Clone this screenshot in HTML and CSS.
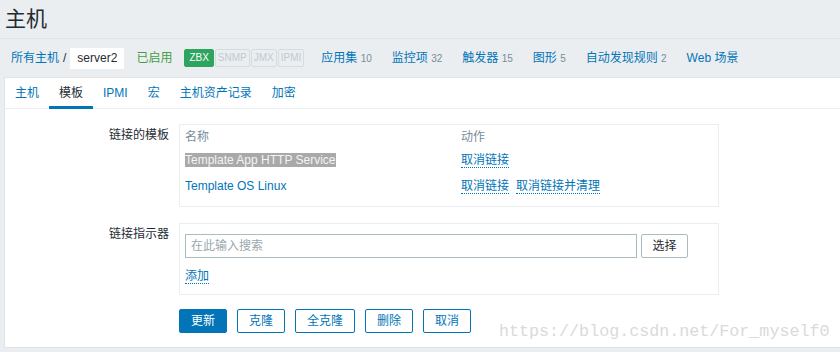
FILE: index.html
```html
<!DOCTYPE html>
<html lang="zh-CN">
  <head>
    <meta charset="UTF-8" />
    <meta name="viewport" content="width=device-width, initial-scale=1.0" />
    <link rel="stylesheet" href="styles.css">
    <title>主机</title>
  </head>
  <body>
    <header class="page-title">
      <h1>主机</h1>
    </header>

    <nav class="host-nav">
      <a class="link" href="#">所有主机</a>
      <span class="sep">/</span>
      <span class="crumb-current">server2</span>
      <span class="status-on">已启用</span>
      <span class="avail">
        <span class="badge on">ZBX</span>
        <span class="badge">SNMP</span>
        <span class="badge">JMX</span>
        <span class="badge">IPMI</span>
      </span>
      <ul class="host-links">
        <li><a class="link" href="#">应用集</a> <span class="count">10</span></li>
        <li><a class="link" href="#">监控项</a> <span class="count">32</span></li>
        <li><a class="link" href="#">触发器</a> <span class="count">15</span></li>
        <li><a class="link" href="#">图形</a> <span class="count">5</span></li>
        <li><a class="link" href="#">自动发现规则</a> <span class="count">2</span></li>
        <li><a class="link" href="#">Web 场景</a></li>
      </ul>
    </nav>

    <main class="panel">
      <ul class="tabs">
        <li><a href="#">主机</a></li>
        <li class="active"><a href="#">模板</a></li>
        <li><a href="#">IPMI</a></li>
        <li><a href="#">宏</a></li>
        <li><a href="#">主机资产记录</a></li>
        <li><a href="#">加密</a></li>
      </ul>

      <form class="form">
        <div class="form-row">
          <label>链接的模板</label>
          <div class="box templates">
            <div class="trow head">
              <span>名称</span>
              <span>动作</span>
            </div>
            <div class="trow first">
              <span><span class="selected">Template App HTTP Service</span></span>
              <span><a class="action" href="#">取消链接</a></span>
            </div>
            <div class="trow second">
              <span><a class="link" href="#">Template OS Linux</a></span>
              <span class="actions">
                <a class="action" href="#">取消链接</a>
                <a class="action" href="#">取消链接并清理</a>
              </span>
            </div>
          </div>
        </div>

        <div class="form-row">
          <label>链接指示器</label>
          <div class="box linker">
            <div class="search">
              <input type="text" placeholder="在此输入搜索" />
              <button type="button" class="btn-grey">选择</button>
            </div>
            <a class="action add" href="#">添加</a>
          </div>
        </div>

        <div class="form-row">
          <span></span>
          <div class="buttons">
            <button type="button" class="btn primary">更新</button>
            <button type="button" class="btn">克隆</button>
            <button type="button" class="btn">全克隆</button>
            <button type="button" class="btn">删除</button>
            <button type="button" class="btn">取消</button>
          </div>
        </div>
      </form>
    </main>

    <div class="watermark">https://blog.csdn.net/For_myself0</div>
  </body>
</html>
```

FILE: styles.css
```css
* {
  box-sizing: border-box;
  --blue: #0275b8;
  --text: #1f2c33;
  --muted: #768d99;
  --line: #dfe4e7;
  --light: #ebeef0;
  --field: #acbbc2;
}

body {
  margin: 0;
  background-color: var(--light);
  color: var(--text);
  font-family: 'Liberation Sans', 'Noto Sans CJK SC', sans-serif;
  font-size: 12px;
  line-height: 14px;
}

a {
  text-decoration: none;
}

ul {
  list-style: none;
  margin: 0;
  padding: 0;
}

.link {
  color: var(--blue);
}

/* title */

.page-title {
  height: 39px;
  border-bottom: 1px solid var(--line);
}

.page-title h1 {
  margin: 0;
  padding-left: 5px;
  font-size: 21px;
  font-weight: normal;
  line-height: 38px;
}

/* host navigation */

.host-nav {
  display: flex;
  align-items: center;
  height: 38px;
  padding-left: 11px;
}

.sep {
  padding: 0 4px;
}

.crumb-current {
  display: flex;
  align-items: center;
  height: 21px;
  padding: 0 7px;
  background-color: white;
}

.status-on {
  margin-left: 12px;
  color: #429e47;
}

.avail {
  display: flex;
  margin-left: 12px;
}

.badge {
  display: flex;
  align-items: center;
  height: 18px;
  padding: 0 2px;
  margin-left: 1px;
  border: 1px solid #d5dce0;
  border-radius: 2px;
  color: #c0cad0;
  font-size: 10px;
}

.badge.on {
  margin-left: 0;
  padding: 0 4px;
  border-color: #2ea55f;
  background-color: #2ea55f;
  color: white;
}

.host-links {
  display: flex;
  gap: 20px;
  margin-left: 17px;
}

.count {
  color: var(--muted);
  font-size: 10px;
}

/* panel */

.panel {
  margin-left: 4px;
  padding-bottom: 14px;
  background-color: white;
  border: 1px solid var(--line);
  border-right: 0;
}

.tabs {
  display: flex;
  height: 31px;
  border-bottom: 1px solid var(--light);
}

.tabs a {
  display: block;
  height: 31px;
  padding: 0 10px;
  color: var(--blue);
  line-height: 30px;
}

.tabs .active a {
  color: var(--text);
  box-shadow: inset 0 -3px 0 var(--blue);
}

/* form */

.form {
  display: grid;
  gap: 16px;
  padding-top: 15px;
}

.form-row {
  display: grid;
  grid-template-columns: 164px 540px;
  column-gap: 10px;
}

.form-row label {
  padding-top: 4px;
  text-align: right;
}

.box {
  border: 1px solid var(--light);
  padding: 0 5px;
}

.templates {
  padding-bottom: 12px;
}

.trow {
  display: grid;
  grid-template-columns: 276px 1fr;
}

.trow.head {
  padding-top: 5px;
  color: var(--muted);
}

.trow.first {
  margin-top: 9px;
}

.trow.second {
  margin-top: 12px;
}

.selected {
  background-color: #a9a9a9;
  color: #f4f4f4;
}

.actions {
  display: flex;
  gap: 7px;
}

.action {
  color: var(--blue);
  border-bottom: 1px dotted var(--blue);
}

.linker {
  padding-top: 10px;
  padding-bottom: 11px;
}

.search {
  display: flex;
  gap: 4px;
  margin-bottom: 11px;
}

input {
  width: 452px;
  height: 24px;
  margin: 0;
  padding: 0 5px;
  border: 1px solid var(--field);
  font: inherit;
  color: var(--text);
}

input::placeholder {
  color: #9aa7ae;
}

button {
  height: 24px;
  margin: 0;
  font: inherit;
  border-radius: 2px;
  cursor: pointer;
}

.btn-grey {
  width: 47px;
  padding: 0;
  border: 1px solid var(--field);
  background-color: white;
  color: var(--text);
}

.buttons {
  display: flex;
  gap: 10px;
  margin-top: -2px;
}

.btn {
  padding: 0 11px;
  border: 1px solid var(--blue);
  background-color: white;
  color: var(--blue);
}

.btn.primary {
  background-color: var(--blue);
  color: white;
}

/* blog watermark */

.watermark {
  position: absolute;
  left: 499px;
  top: 322px;
  color: #dadada;
  font-family: 'Liberation Mono', monospace;
  font-size: 16.7px;
  line-height: 20px;
}
```
